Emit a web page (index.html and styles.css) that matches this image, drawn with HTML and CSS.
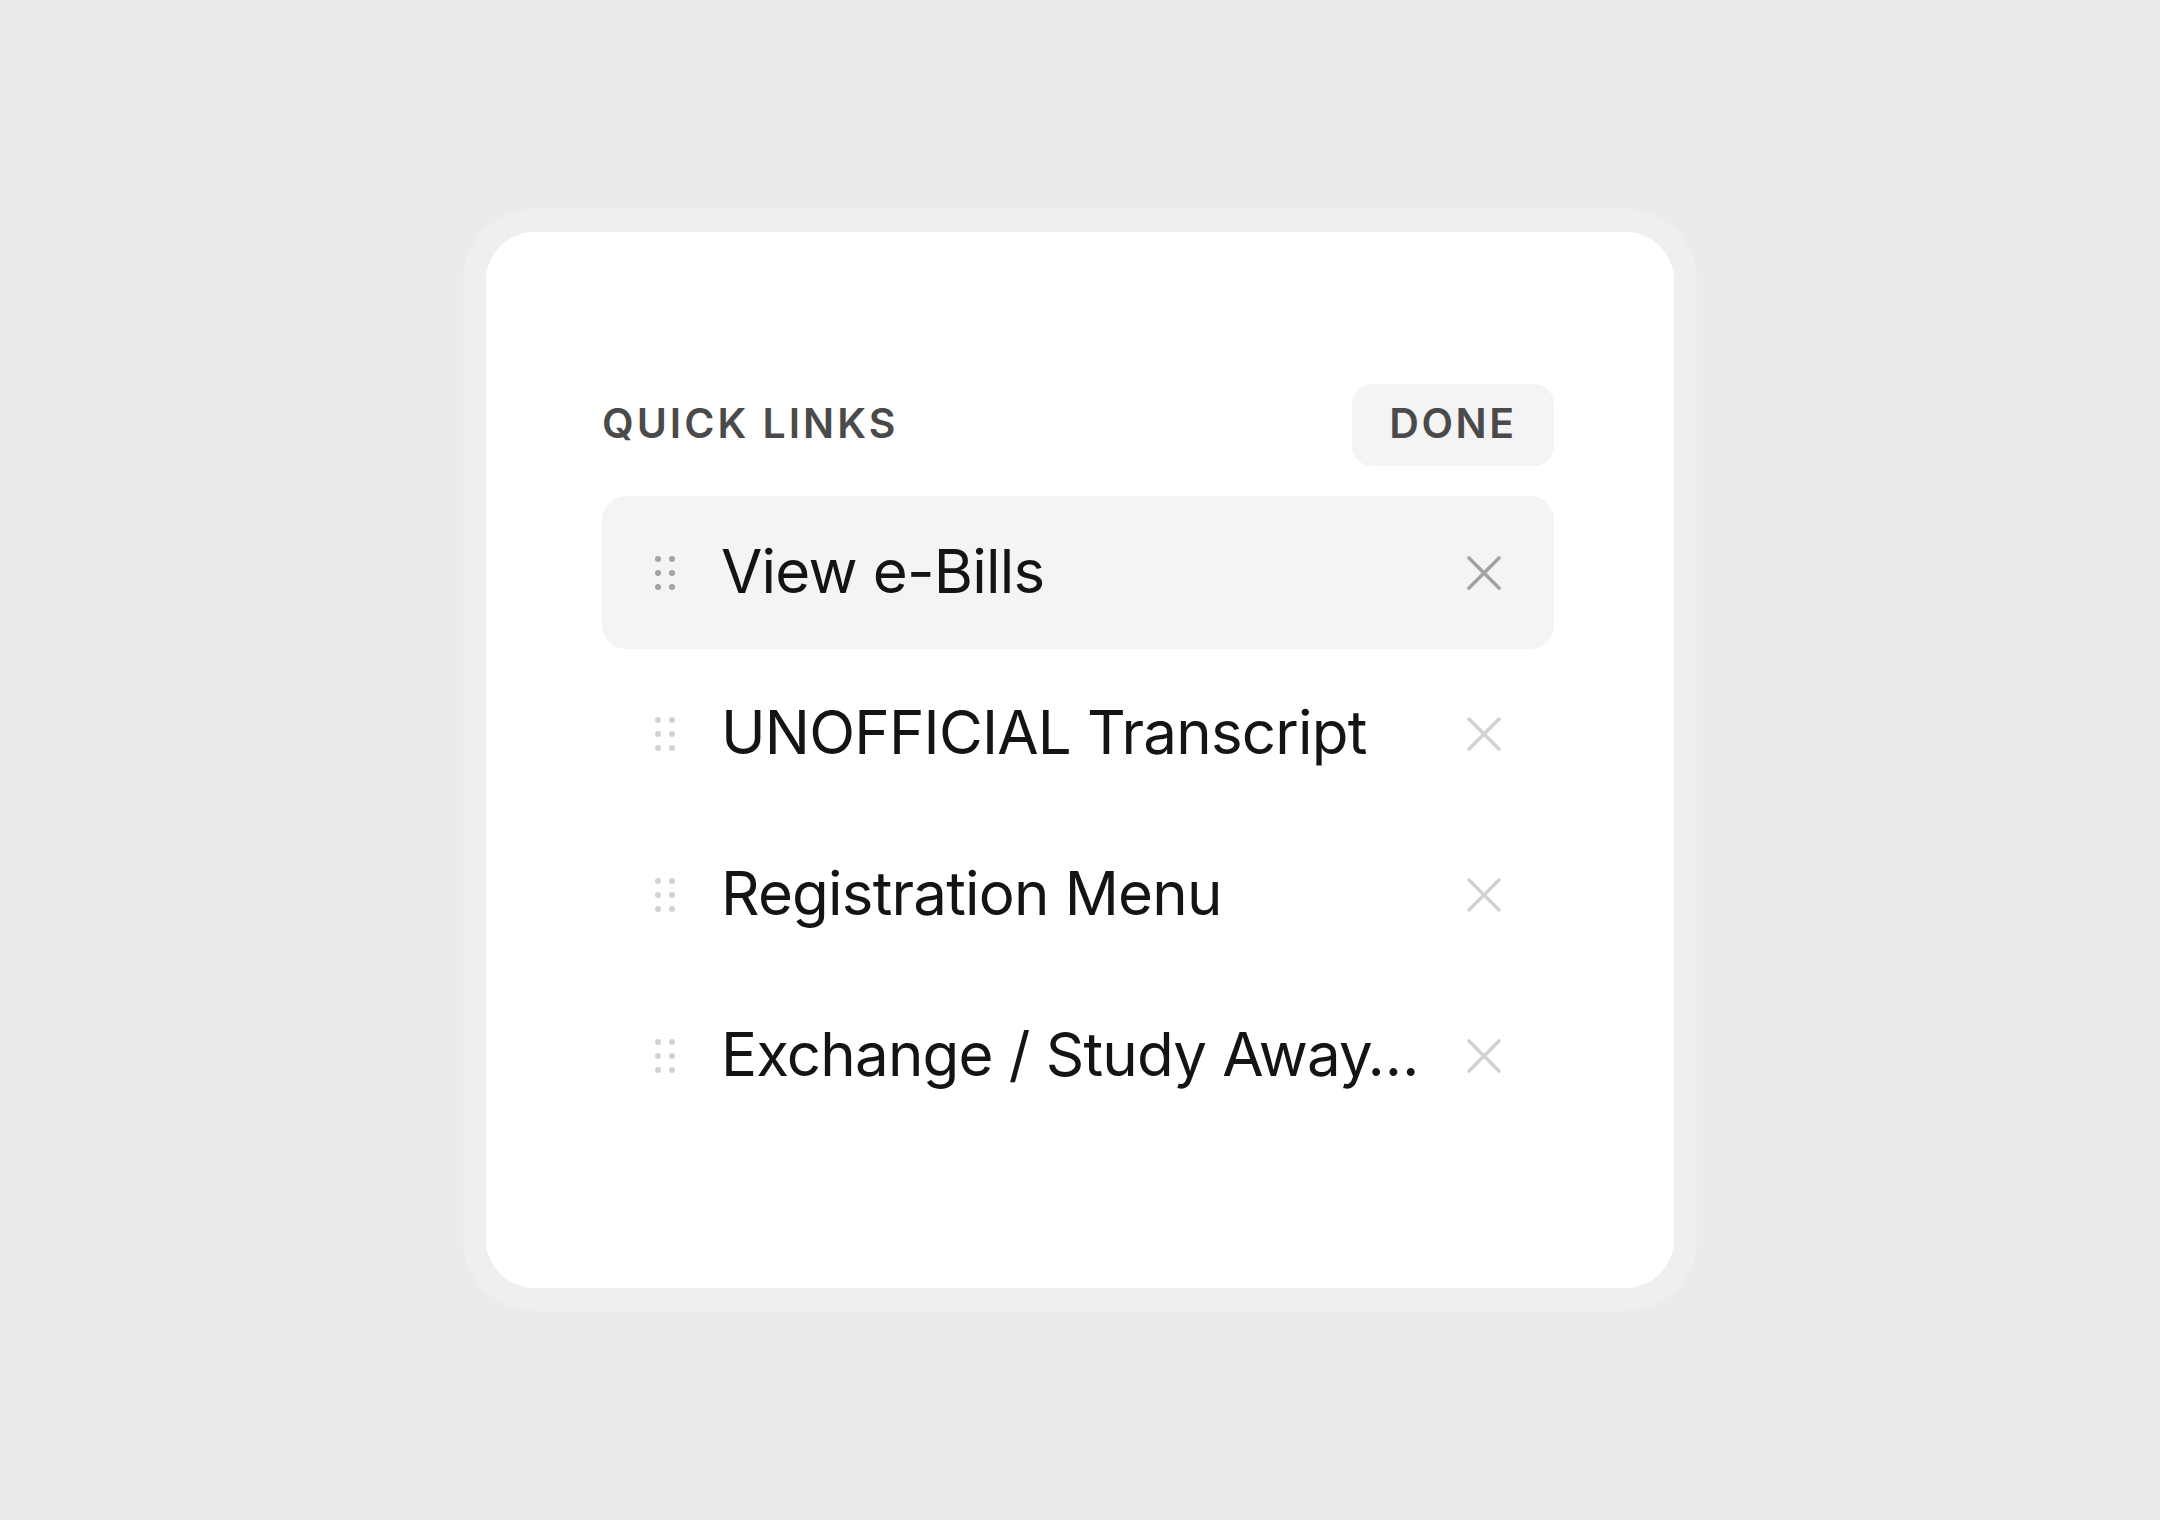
FILE: index.html
```html
<!DOCTYPE html>
<html lang="en">
<head>
<meta charset="utf-8">
<title>Quick Links</title>
<link rel="stylesheet" href="styles.css">
</head>
<body>
<div class="frame">
  <section class="card">
    <header class="header">
      <h2 class="title">QUICK LINKS</h2>
      <button class="done">DONE</button>
    </header>
    <ul class="list">
      <li class="item active">
        <svg class="handle" viewBox="0 0 24 40" width="24" height="40"><g fill="currentColor"><circle cx="5" cy="6" r="3"/><circle cx="19" cy="6" r="3"/><circle cx="5" cy="20" r="3"/><circle cx="19" cy="20" r="3"/><circle cx="5" cy="34" r="3"/><circle cx="19" cy="34" r="3"/></g></svg>
        <span class="label">View e-Bills</span>
        <svg class="remove" viewBox="0 0 34 34" width="34" height="34"><path d="M2 2L32 32M32 2L2 32" stroke="currentColor" stroke-width="3.6" stroke-linecap="round"/></svg>
      </li>
      <li class="item">
        <svg class="handle" viewBox="0 0 24 40" width="24" height="40"><g fill="currentColor"><circle cx="5" cy="6" r="3"/><circle cx="19" cy="6" r="3"/><circle cx="5" cy="20" r="3"/><circle cx="19" cy="20" r="3"/><circle cx="5" cy="34" r="3"/><circle cx="19" cy="34" r="3"/></g></svg>
        <span class="label">UNOFFICIAL Transcript</span>
        <svg class="remove" viewBox="0 0 34 34" width="34" height="34"><path d="M2 2L32 32M32 2L2 32" stroke="currentColor" stroke-width="3.6" stroke-linecap="round"/></svg>
      </li>
      <li class="item">
        <svg class="handle" viewBox="0 0 24 40" width="24" height="40"><g fill="currentColor"><circle cx="5" cy="6" r="3"/><circle cx="19" cy="6" r="3"/><circle cx="5" cy="20" r="3"/><circle cx="19" cy="20" r="3"/><circle cx="5" cy="34" r="3"/><circle cx="19" cy="34" r="3"/></g></svg>
        <span class="label">Registration Menu</span>
        <svg class="remove" viewBox="0 0 34 34" width="34" height="34"><path d="M2 2L32 32M32 2L2 32" stroke="currentColor" stroke-width="3.6" stroke-linecap="round"/></svg>
      </li>
      <li class="item">
        <svg class="handle" viewBox="0 0 24 40" width="24" height="40"><g fill="currentColor"><circle cx="5" cy="6" r="3"/><circle cx="19" cy="6" r="3"/><circle cx="5" cy="20" r="3"/><circle cx="19" cy="20" r="3"/><circle cx="5" cy="34" r="3"/><circle cx="19" cy="34" r="3"/></g></svg>
        <span class="label">Exchange / Study Away…</span>
        <svg class="remove" viewBox="0 0 34 34" width="34" height="34"><path d="M2 2L32 32M32 2L2 32" stroke="currentColor" stroke-width="3.6" stroke-linecap="round"/></svg>
      </li>
    </ul>
  </section>
</div>
</body>
</html>
```
FILE: styles.css
```css
* { box-sizing: border-box; }
html, body { margin: 0; padding: 0; }
body {
  background: #ebebeb;
  min-height: 100vh;
  display: flex;
  align-items: center;
  justify-content: center;
  font-family: Inter, "Noto Sans", "Liberation Sans", sans-serif;
}
.frame {
  padding: 23px;
  background: #efefef;
  border-radius: 72px;
}
.card {
  width: 1188px;
  height: 1056px;
  background: #ffffff;
  border-radius: 48px;
  padding: 152px 120px 0 116px;
}
.header {
  display: flex;
  align-items: center;
  justify-content: space-between;
  height: 82px;
}
.title {
  margin: 0 0 3px;
  font-size: 41px;
  font-weight: 600;
  letter-spacing: 3px;
  color: #4a4a4a;
  line-height: 1;
}
.done {
  width: 202px;
  height: 82px;
  border: 0;
  border-radius: 20px;
  background: #f4f4f4;
  font-family: inherit;
  font-size: 41px;
  font-weight: 600;
  letter-spacing: 2.6px;
  color: #4a4a4a;
  padding: 0 0 4px;
  line-height: 1;
}
.list {
  list-style: none;
  margin: 30px 0 0;
  padding: 0;
  display: flex;
  flex-direction: column;
  gap: 8px;
}
.item {
  height: 153px;
  display: flex;
  align-items: center;
  padding: 0 53px 0 51px;
  border-radius: 24px;
  color: #d2d2d2;
}
.item.active {
  background: #f4f4f4;
  color: #a3a3a3;
}
.handle {
  flex: none;
  display: block;
}
.label {
  flex: 1;
  min-width: 0;
  margin-left: 44px;
  margin-right: 24px;
  padding-bottom: 3px;
  font-size: 60px;
  font-weight: 400;
  letter-spacing: -0.8px;
  color: #141414;
  white-space: nowrap;
  overflow: hidden;
  text-overflow: ellipsis;
  line-height: 1.2;
}
.remove {
  flex: none;
  display: block;
}
```
